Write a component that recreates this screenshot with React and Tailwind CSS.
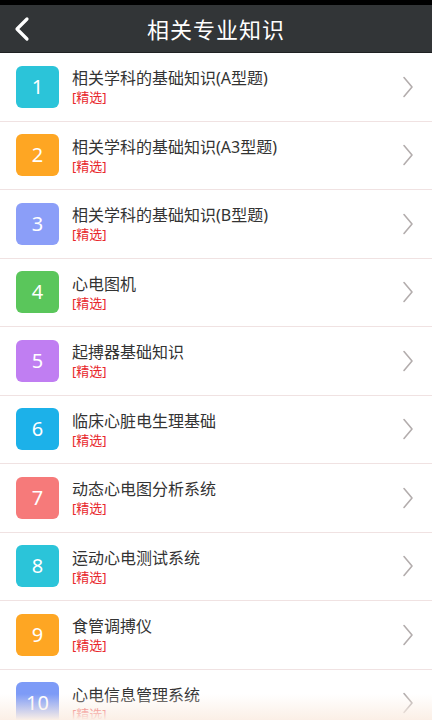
import React from "react";

const items = [
  { n: 1, title: "相关学科的基础知识(A型题)", color: "bg-[#2bc4d9]" },
  { n: 2, title: "相关学科的基础知识(A3型题)", color: "bg-[#fea623]" },
  { n: 3, title: "相关学科的基础知识(B型题)", color: "bg-[#8b9ef8]" },
  { n: 4, title: "心电图机", color: "bg-[#5ac65b]" },
  { n: 5, title: "起搏器基础知识", color: "bg-[#c07ef2]" },
  { n: 6, title: "临床心脏电生理基础", color: "bg-[#1cb1e9]" },
  { n: 7, title: "动态心电图分析系统", color: "bg-[#f67a7a]" },
  { n: 8, title: "运动心电测试系统", color: "bg-[#2bc4d9]" },
  { n: 9, title: "食管调搏仪", color: "bg-[#fea623]" },
  { n: 10, title: "心电信息管理系统", color: "bg-[#7d9bf7]" },
];

const Chevron = () => (
  <svg width="12" height="22" viewBox="0 0 12 22" fill="none">
    <path d="M2 1.5 L10 11 L2 20.5" stroke="#b3adad" strokeWidth="1.6" strokeLinecap="round" strokeLinejoin="round" />
  </svg>
);

const App = () => {
  return (
    <div
      className="relative w-[432px] h-[720px] overflow-hidden bg-white"
      style={{ fontFamily: '"Noto Sans", "Noto Sans CJK SC", sans-serif' }}
    >
      <div className="h-[5px] bg-black" />
      <div className="relative h-[48px] bg-[#323537] border-b border-[#1f2123] flex items-center justify-center">
        <div className="absolute left-[13px] top-[11px]">
          <svg width="18" height="26" viewBox="0 0 18 26" fill="none">
            <path d="M14 3 L4 13 L14 23" stroke="white" strokeWidth="3.2" strokeLinecap="round" strokeLinejoin="round" />
          </svg>
        </div>
        <h1 className="text-white text-[22px] leading-none tracking-[1px]">相关专业知识</h1>
      </div>

      <div className="flex flex-col">
        {items.map((item) => (
          <div
            key={item.n}
            className="h-[68.5px] shrink-0 flex items-center border-b border-[#f0e2e2] pl-4 pr-[18px]"
          >
            <div
              className={`${item.color} w-[43px] h-[42px] rounded-[6px] flex items-center justify-center text-white text-[20px]`}
            >
              {item.n}
            </div>
            <div className="flex-1 pl-[13px] flex flex-col gap-0 mt-[1px]">
              <span className="text-[16px] leading-[18px] text-[#333]">{item.title}</span>
              <span className="text-[13px] leading-[15px] mt-[3px] text-[#e8262b]">[精选]</span>
            </div>
            <Chevron />
          </div>
        ))}
      </div>

      <div className="absolute left-0 right-0 bottom-0 h-[26px] bg-gradient-to-b from-[#fdf3ec]/0 to-[#fbefe6]" />
    </div>
  );
};

export default App;
